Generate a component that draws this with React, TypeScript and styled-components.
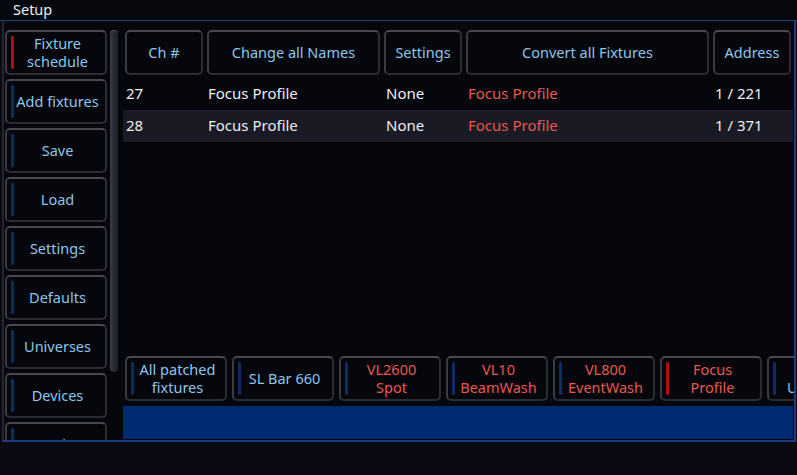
import styled, { createGlobalStyle } from "styled-components";

const GlobalStyle = createGlobalStyle`
  html, body {
    margin: 0;
    padding: 0;
    background: #090a12;
  }
  body {
    font-family: "Noto Sans", "Open Sans", sans-serif;
  }
`;

const Screen = styled.div`
  width: 797px;
  height: 475px;
  background: #090a12;
  overflow: hidden;
`;

const TitleBar = styled.div`
  height: 20px;
  padding-left: 13px;
  font-size: 14.5px;
  line-height: 19px;
  color: #eceef2;
  background: #07080e;
  border-bottom: 1px solid #1d3c7c;
`;

const Window = styled.div`
  height: 421px;
  display: flex;
  background: #06070d;
  border-left: 2px solid #24262e;
  border-right: 2px solid #1d3c7c;
  border-bottom: 2px solid #1d3c7c;
  margin-left: 2px;
  margin-right: 1px;
  box-sizing: border-box;
`;

const Sidebar = styled.div`
  width: 102px;
  padding: 9px 0 0 1px;
  display: flex;
  flex-direction: column;
  gap: 4px;
  overflow: hidden;
  flex-shrink: 0;
`;

const ScrollTrack = styled.div`
  width: 13px;
  padding-top: 9px;
  display: flex;
  justify-content: center;
  flex-shrink: 0;
`;

const ScrollThumb = styled.div`
  width: 8px;
  height: 342px;
  border-radius: 4px;
  background: linear-gradient(90deg, #3a3c46 0%, #2a2c35 40%, #1c1e25 100%);
  box-shadow: inset 0 1px 0 #4a4c56;
`;

const Main = styled.div`
  flex: 1;
  padding: 9px 0 0 3px;
  display: flex;
  flex-direction: column;
  min-width: 0;
`;

const Button = styled.div<{ $w?: number }>`
  box-sizing: border-box;
  height: 45px;
  width: ${(p) => (p.$w ? `${p.$w}px` : "100%")};
  flex-shrink: 0;
  display: flex;
  align-items: center;
  padding-bottom: 1px;
  background: #06070c;
  border: 2px solid #2b2d35;
  border-top-color: #474951;
  border-left-color: #3a3c44;
  border-radius: 5px;
  font-size: 14.5px;
  line-height: 18px;
  color: #8cc6ea;
  text-align: center;
  overflow: hidden;
`;

const Indicator = styled.span<{ $red?: boolean }>`
  width: 3px;
  height: 33px;
  margin-left: 4px;
  flex-shrink: 0;
  border-radius: 1px;
  background: ${(p) => (p.$red ? "#b30d12" : "#0d2b66")};
`;

const Label = styled.span<{ $red?: boolean }>`
  flex: 1;
  padding-right: 4px;
  color: ${(p) => (p.$red ? "#e8584f" : "#8cc6ea")};
  white-space: nowrap;
`;

const Line = styled.span`
  display: block;
  height: 18px;
`;

const HeaderLabel = styled.span`
  flex: 1;
  white-space: nowrap;
`;

const HeaderRow = styled.div`
  display: flex;
  gap: 4px;
  padding-left: 2px;
`;

const Table = styled.div`
  margin-top: 3px;
  margin-right: 1px;
`;

const Row = styled.div<{ $alt?: boolean }>`
  box-sizing: border-box;
  height: 32px;
  padding: 0 0 2px 3px;
  display: grid;
  grid-template-columns: 82px 178px 82px 247px 82px;
  align-items: center;
  background: ${(p) => (p.$alt ? "#191a23" : "transparent")};
  font-size: 15px;
  color: #eceef2;
`;

const Cell = styled.span<{ $red?: boolean }>`
  color: ${(p) => (p.$red ? "#e8584f" : "#eceef2")};
  white-space: nowrap;
`;

const Spacer = styled.div`
  flex: 1;
`;

const TypeBar = styled.div`
  display: flex;
  gap: 5px;
  padding-left: 2px;
  overflow: hidden;
`;

const BlueBar = styled.div`
  height: 33px;
  margin-top: 5px;
  margin-bottom: 1px;
  margin-right: 1px;
  background: #002a72;
`;

const sideItems: { lines: string[]; red?: boolean }[] = [
  { lines: ["Fixture", "schedule"], red: true },
  { lines: ["Add fixtures"] },
  { lines: ["Save"] },
  { lines: ["Load"] },
  { lines: ["Settings"] },
  { lines: ["Defaults"] },
  { lines: ["Universes"] },
  { lines: ["Devices"] },
  { lines: ["Tri"] },
];

const headers: { label: string; w: number }[] = [
  { label: "Ch #", w: 78 },
  { label: "Change all Names", w: 173 },
  { label: "Settings", w: 78 },
  { label: "Convert all Fixtures", w: 243 },
  { label: "Address", w: 78 },
];

const rows = [
  { ch: "27", name: "Focus Profile", settings: "None", type: "Focus Profile", addr: "1 / 221" },
  { ch: "28", name: "Focus Profile", settings: "None", type: "Focus Profile", addr: "1 / 371" },
];

const types: { lines: string[]; red?: boolean; active?: boolean }[] = [
  { lines: ["All patched", "fixtures"] },
  { lines: ["SL Bar 660"] },
  { lines: ["VL2600", "Spot"], red: true },
  { lines: ["VL10", "BeamWash"], red: true },
  { lines: ["VL800", "EventWash"], red: true },
  { lines: ["Focus", "Profile"], red: true, active: true },
  { lines: ["", "Unknown"] },
];

export default function App() {
  return (
    <Screen>
      <GlobalStyle />
      <TitleBar>Setup</TitleBar>
      <Window>
        <Sidebar>
          {sideItems.map((it) => (
            <Button key={it.lines.join(" ")}>
              <Indicator $red={it.red} />
              <Label>
                {it.lines.map((l, j) => (
                  <Line key={j}>{l}</Line>
                ))}
              </Label>
            </Button>
          ))}
        </Sidebar>
        <ScrollTrack>
          <ScrollThumb />
        </ScrollTrack>
        <Main>
          <HeaderRow>
            {headers.map((h) => (
              <Button key={h.label} $w={h.w}>
                <HeaderLabel>{h.label}</HeaderLabel>
              </Button>
            ))}
          </HeaderRow>
          <Table>
            {rows.map((r, i) => (
              <Row key={r.ch} $alt={i % 2 === 1}>
                <Cell>{r.ch}</Cell>
                <Cell>{r.name}</Cell>
                <Cell>{r.settings}</Cell>
                <Cell $red>{r.type}</Cell>
                <Cell>{r.addr}</Cell>
              </Row>
            ))}
          </Table>
          <Spacer />
          <TypeBar>
            {types.map((t, i) => (
              <Button key={i} $w={102}>
                <Indicator $red={t.active} />
                <Label $red={t.red}>
                  {t.lines.map((l, j) => (
                    <Line key={j}>{l}</Line>
                  ))}
                </Label>
              </Button>
            ))}
          </TypeBar>
          <BlueBar />
        </Main>
      </Window>
    </Screen>
  );
}
